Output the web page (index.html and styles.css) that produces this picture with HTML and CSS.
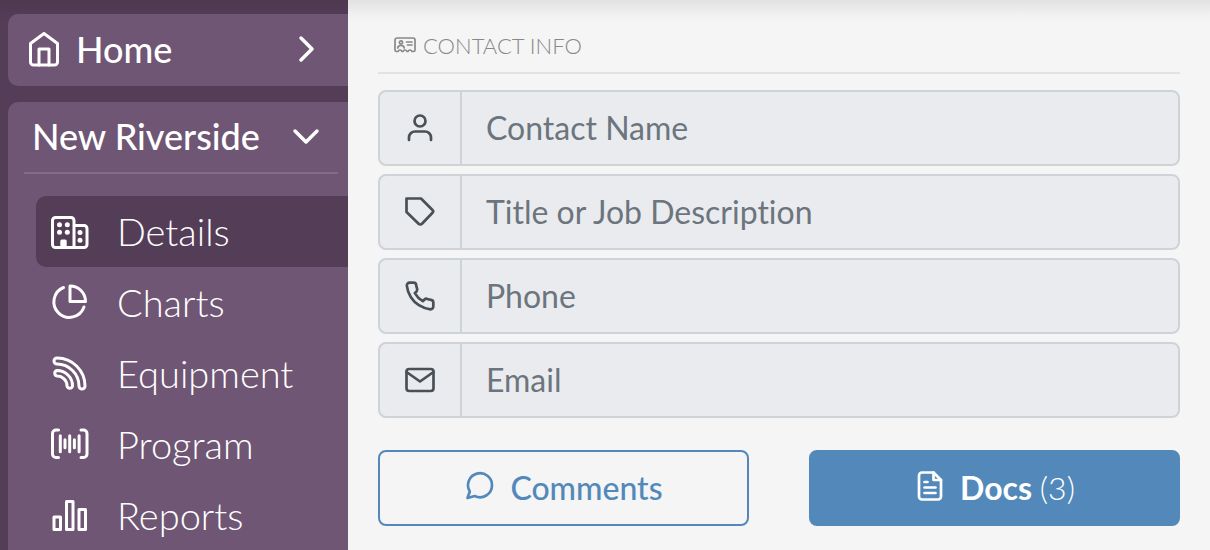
FILE: index.html
```html
<!DOCTYPE html>
<html lang="en">
<head>
  <meta charset="UTF-8" />
  <meta name="viewport" content="width=device-width, initial-scale=1" />
  <title>New Riverside - Details</title>
  <link rel="stylesheet" href="styles.css">
</head>
<body>

  <!-- Sidebar -->
  <nav class="sidebar">
    <a href="#home" class="card home-link">
      <svg viewBox="0 0 32 36" width="32" height="36">
        <path d="M2.5 12.5 16 2.5l13.5 10V31a3 3 0 0 1-3 3h-21a3 3 0 0 1-3-3z" />
        <path d="M11 34V18h10v16" />
      </svg>
      <span class="card-title">Home</span>
      <svg class="chevron" viewBox="0 0 28 28" width="28" height="28">
        <path d="M9 3 20 14 9 25" />
      </svg>
    </a>

    <div class="card site-card">
      <button type="button" class="site-toggle" aria-expanded="true">
        <span class="card-title">New Riverside</span>
        <svg class="chevron" viewBox="0 0 28 28" width="28" height="28">
          <path d="M3 9 14 20 25 9" />
        </svg>
      </button>

      <ul class="site-menu">
        <li>
          <a href="#details" class="active">
            <svg viewBox="0 0 40 40" width="40" height="40">
              <path d="M24 35.5H5.5a3 3 0 0 1-3-3v-24a3 3 0 0 1 3-3H21a3 3 0 0 1 3 3zM24 13.5h10a3 3 0 0 1 3 3v16a3 3 0 0 1-3 3H24" />
              <g class="solid">
                <circle cx="9.5" cy="12.7" r="2.5" />
                <circle cx="17.3" cy="12.7" r="2.5" />
                <circle cx="9.5" cy="20.3" r="2.5" />
                <circle cx="17.3" cy="20.3" r="2.5" />
                <circle cx="30" cy="20.5" r="2.5" />
                <circle cx="30" cy="28.3" r="2.5" />
                <path d="M10.3 36v-7q0-1.5 1.5-1.5h3.4q1.5 0 1.5 1.5v7z" />
              </g>
            </svg>
            <span>Details</span>
          </a>
        </li>
        <li>
          <a href="#charts">
            <svg viewBox="0 0 40 40" width="40" height="40">
              <path d="M20 3a15.500 15.500 0 0 1 15.500 15.500H20z" />
              <path d="M13.500 4.500A15.500 15.500 0 1 0 34 24" />
            </svg>
            <span>Charts</span>
          </a>
        </li>
        <li>
          <a href="#equipment">
            <svg viewBox="0 0 40 40" width="40" height="40">
              <path d="M7 4A28 28 0 0 1 35 32A3 3 0 0 1 29 32A22 22 0 0 0 7 10A3 3 0 0 1 7 4Z" />
              <path d="M7 16.5A15.5 15.5 0 0 1 22.5 32A2.8 2.8 0 0 1 17 32A10 10 0 0 0 7 22A2.8 2.8 0 0 1 7 16.5Z" />
            </svg>
            <span>Equipment</span>
          </a>
        </li>
        <li>
          <a href="#program">
            <svg viewBox="0 0 40 40" width="40" height="40">
              <path d="M8.5 5H6a3.5 3.5 0 0 0-3.5 3.5V29A3.5 3.5 0 0 0 6 32.5h2.5M31 5h2.5A3.5 3.5 0 0 1 37 8.5V29a3.5 3.5 0 0 1-3.5 3.5H31" />
              <path d="M10.3 10.8v16M15 14.8v8M19.7 10.8v16M24.4 14.8v8M29.1 10.8v16" />
            </svg>
            <span>Program</span>
          </a>
        </li>
        <li>
          <a href="#reports">
            <svg viewBox="0 0 40 40" width="40" height="40">
              <path d="M4 21h6.5v12.5H4zM16.5 5.5H23v28h-6.5zM29 13.5h6.5v20H29z" />
            </svg>
            <span>Reports</span>
          </a>
        </li>
      </ul>
    </div>
  </nav>

  <!-- Contact form -->
  <main class="content">
    <h2 class="section-title">
      <svg viewBox="0 0 22 16" width="22" height="16">
        <path d="M3 1h16a2 2 0 0 1 2 2v10a1.500 1.500 0 0 1-1.500 1.500h-1.500q-.5-1.500-2-1.500t-2 1.500h-1q-.5-1.500-2-1.500t-2 1.500h-1q-.5-1.500-2-1.500t-2 1.500H2.500A1.500 1.500 0 0 1 1 13V3a2 2 0 0 1 2-2z" />
        <circle cx="7" cy="5.500" r="1.600" />
        <path d="M3.800 11q0-2.500 3.200-2.500t3.200 2.500M12.500 5H18M13.500 8H18" />
      </svg>
      Contact Info
    </h2>

    <form class="contact-form">
      <div class="field">
        <label for="contactName" title="Contact Name">
          <svg viewBox="0 0 32 32" width="32" height="32">
            <circle cx="16" cy="9" r="5.5" />
            <path d="M5 28v-2.500a6 6 0 0 1 6-6h10a6 6 0 0 1 6 6V28" />
          </svg>
        </label>
        <input type="text" id="contactName" placeholder="Contact Name" />
      </div>

      <div class="field">
        <label for="jobTitle" title="Title or Job Description">
          <svg viewBox="0 0 32 32" width="32" height="32">
            <path d="M2.5 2.5H17L28.500 14a2 2 0 0 1 0 2.800L18 27.800a2.400 2.400 0 0 1-3.400 0L2.500 16z" />
          </svg>
        </label>
        <input type="text" id="jobTitle" placeholder="Title or Job Description" />
      </div>

      <div class="field">
        <label for="phone" title="Phone">
          <svg viewBox="0 0 32 32" width="32" height="32">
            <path d="M29.300 22.600v4a2.700 2.700 0 0 1-2.900 2.700 26.400 26.400 0 0 1-11.500-4.100 26 26 0 0 1-8-8A26.400 26.400 0 0 1 2.800 5.600 2.700 2.700 0 0 1 5.500 2.700h4a2.700 2.700 0 0 1 2.700 2.300 17.100 17.100 0 0 0 .9 3.700 2.700 2.700 0 0 1-.6 2.800l-1.700 1.700a21.300 21.300 0 0 0 8 8l1.700-1.700a2.700 2.700 0 0 1 2.800-.6 17.100 17.100 0 0 0 3.700.9 2.700 2.700 0 0 1 2.300 2.800z" />
          </svg>
        </label>
        <input type="tel" id="phone" placeholder="Phone" />
      </div>

      <div class="field">
        <label for="email" title="Email">
          <svg viewBox="0 0 32 32" width="32" height="32">
            <rect x="2.5" y="5" width="27" height="22" rx="2.7" />
            <path d="M2.5 8 16 17.5 29.5 8" />
          </svg>
        </label>
        <input type="email" id="email" placeholder="Email" />
      </div>

      <div class="button-group">
        <button type="button" class="btn btn-outline">
          <svg viewBox="0 0 32 32" width="32" height="32">
            <path d="M28 15.5A12 12 0 0 1 10.700 26L3.500 28l2.300-6.500A12 12 0 1 1 28 15.500z" />
          </svg>
          Comments
        </button>
        <button type="button" class="btn btn-primary">
          <svg viewBox="0 0 32 32" width="32" height="32">
            <path d="M19.500 2.500H8A3 3 0 0 0 5 5.500v21a3 3 0 0 0 3 3h16a3 3 0 0 0 3-3V10z" />
            <path d="M19.500 2.500V10H27M10.500 12h3M10.500 17.500h11M10.500 23h11" />
          </svg>
          <span>Docs <span class="count">(3)</span></span>
        </button>
      </div>
    </form>
  </main>

</body>
</html>
```
FILE: styles.css
```css
* {
  box-sizing: border-box;
}

body {
  display: flex;
  height: 100vh;
  margin: 0;
  overflow: hidden;
  font-family: Lato, "Liberation Sans", sans-serif;
  font-variant-ligatures: none;
  background: #f5f5f5;
}

/* Shadow of the top bar */
body::before {
  content: "";
  position: absolute;
  top: 0;
  left: 0;
  right: 0;
  height: 24px;
  background: linear-gradient(rgba(0, 0, 0, 0.08), rgba(0, 0, 0, 0.02) 60%, rgba(0, 0, 0, 0));
  pointer-events: none;
}

svg {
  flex: none;
  fill: none;
  stroke: currentColor;
  stroke-width: 3;
  stroke-linecap: round;
  stroke-linejoin: round;
}

button,
input {
  font-family: inherit;
  font-variant-ligatures: inherit;
}

/* Sidebar */
.sidebar {
  display: flex;
  flex-direction: column;
  flex: none;
  gap: 16px;
  width: 348px;
  padding: 14px 0 0 8px;
  background: #543d57;
  color: white;
}

.card {
  position: relative;
  background: #6f5674;
  border-radius: 10px 0 0 10px;
}

.home-link {
  display: flex;
  align-items: center;
  flex: none;
  gap: 16px;
  height: 72px;
  padding: 0 28px 2px 20px;
  color: white;
  text-decoration: none;
}

.card-title {
  flex: 1;
  font-size: 36px;
  font-weight: 500;
  line-height: 44px;
  text-align: left;
}

.chevron {
  stroke-width: 3.5;
}

.site-card {
  flex: 1;
  border-bottom-left-radius: 0;
}

.site-toggle {
  display: flex;
  align-items: center;
  width: calc(100% - 26px);
  height: 72px;
  margin: 0 10px 22px 16px;
  padding: 0 18px 2px 8px;
  background: none;
  border: none;
  border-bottom: 2px solid #836c88;
  color: white;
  cursor: pointer;
}

.site-menu {
  margin: 0;
  padding: 0 0 0 28px;
  list-style: none;
}

.site-menu a {
  display: flex;
  align-items: center;
  gap: 27px;
  height: 71px;
  padding-left: 14px;
  border-radius: 10px 0 0 10px;
  color: white;
  font-size: 38px;
  font-weight: 300;
  line-height: 44px;
  text-decoration: none;
}

.site-menu span {
  padding-bottom: 2px;
}

.site-menu a.active {
  background: #543d57;
}

.solid {
  fill: currentColor;
  stroke: none;
}

/* Contact form */
.content {
  flex: 1;
  min-width: 0;
  padding: 20px 30px;
}

.section-title {
  display: flex;
  align-items: center;
  gap: 7px;
  height: 54px;
  margin: 0 0 16px;
  padding: 0 16px 2px;
  border-bottom: 2px solid #e2e2e2;
  color: #888;
  font-size: 22px;
  font-weight: 300;
  text-transform: uppercase;
}

.section-title svg {
  stroke-width: 1.7;
}

.contact-form {
  display: flex;
  flex-direction: column;
  gap: 8px;
}

.field {
  display: flex;
  height: 76px;
  background: #eaebef;
  border: 2px solid #cdd3d7;
  border-radius: 8px;
  overflow: hidden;
}

.field label {
  display: flex;
  align-items: center;
  justify-content: center;
  width: 82px;
  border-right: 2px solid #cdd3d7;
  color: #495057;
}

.field svg,
.btn svg {
  stroke-width: 2.7;
}

.field input {
  flex: 1;
  min-width: 0;
  padding: 0 24px 2px;
  background: none;
  border: none;
  outline: none;
  color: #495057;
  font-size: 32px;
}

.field input::placeholder {
  color: #6c757d;
}

.button-group {
  display: grid;
  grid-template-columns: 1fr 1fr;
  gap: 60px;
  margin-top: 24px;
}

.btn {
  display: flex;
  align-items: center;
  justify-content: center;
  gap: 14px;
  height: 76px;
  padding: 0 6px 2px;
  border: 2px solid #5289ba;
  border-radius: 8px;
  font-size: 32px;
  font-weight: 500;
  cursor: pointer;
}

.btn svg {
  margin-bottom: 2px;
}

.btn-outline {
  background: none;
  color: #5289ba;
}

.btn-primary {
  background: #5289ba;
  color: white;
  font-weight: 700;
}

.count {
  font-weight: 300;
}
```
